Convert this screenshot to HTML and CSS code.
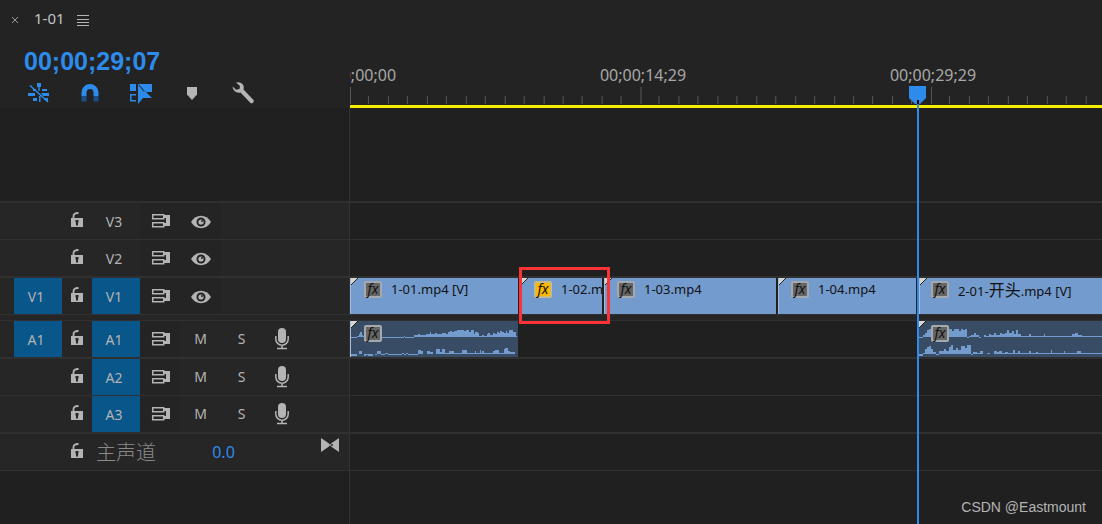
FILE: index.html
```html
<!DOCTYPE html>
<html lang="zh-CN">
<head>
<meta charset="utf-8">
<title>1-01</title>
<link rel="stylesheet" href="styles.css">
</head>
<body>
<svg class="defs" aria-hidden="true">
  <symbol id="lock" viewBox="0 0 14 16"><path d="M1 6h12v9H1z"/><path d="M3.500 6V4Q3.500 .8 8.500 1" fill="none" stroke="currentColor" stroke-width="1.800"/><path d="M5.500 8h3v2.500H8v3H6v-3h-.5z" fill="#262626"/></symbol>
  <symbol id="sync" viewBox="0 0 20 16"><path d="M1.700 1.700h11v4h-11zM1.700 9.700h11v4h-11z" fill="none" stroke="currentColor" stroke-width="1.500"/><path d="M13 2h6v11h-6v-3h2V5h-2z"/></symbol>
  <symbol id="eye" viewBox="0 0 20 14"><path d="M0 7Q4 .8 10 .8T20 7Q16 13.200 10 13.200T0 7z"/><circle cx="10" cy="7" r="4.500" fill="#242424"/><circle cx="10" cy="7" r="2.600"/><circle cx="11" cy="6" r="1" fill="#242424"/></symbol>
  <symbol id="mic" viewBox="0 0 16 22"><rect x="4" y="0" width="8" height="15" rx="4"/><path d="M1.800 8v3a6.200 6.200 0 0 0 12.400 0V8M8 17v3M3 20.500h10" fill="none" stroke="currentColor" stroke-width="1.500"/></symbol>
</svg>

<main class="timeline">
  <section class="top">
    <div class="panel">
      <div class="tab">
        <button class="close" aria-label="关闭"><svg viewBox="0 0 8 8"><path d="M1 1l6 6M7 1L1 7"/></svg></button>
        <span class="name">1-01</span>
        <button class="menu" aria-label="菜单"><svg viewBox="0 0 12 11"><path d="M0 .5h12M0 4.500h12M0 7.500h12M0 10.500h12"/></svg></button>
      </div>
      <div class="timecode">00;00;29;07</div>
      <div class="tools">
        <button class="on" aria-label="嵌套"><svg viewBox="0 0 22 22"><path d="M9 1h4v4h-1.300v4h-1.400V5H9zM5 7h3v2H5zM14 7h5v2h-5zM0 11h7v3H0zM13 11h8v3h-6zM5 16h4v3H5zM11 14h1.500v6H11zM16 16h4v3h-2z"/><path d="M2 3.500L20 20" fill="none" stroke="currentColor" stroke-width="1.500"/></svg></button>
        <button class="on" aria-label="对齐"><svg viewBox="0 0 22 22"><path d="M5 14V10.500a6 6 0 0 1 12 0V14" fill="none" stroke="currentColor" stroke-width="5"/><path d="M2.500 14h5v5.500h-5zM14.500 14h5v5.500h-5z" fill="#1c4f88"/></svg></button>
        <button class="on" aria-label="链接选择项"><svg viewBox="0 0 22 22"><path d="M0 2h6v7H0zM8 2h14v8h-6z"/><path d="M8 2v20l5-6h9z"/><path d="M14 9.500L9 3" stroke="#232323" fill="none"/><path d="M6 12.700H.8v6H6" fill="none" stroke="currentColor" stroke-width="1.500"/></svg></button>
        <button aria-label="添加标记"><svg viewBox="0 0 22 22"><path d="M6 5h10v7.500L11 18l-5-5.500z"/></svg></button>
        <button aria-label="设置"><svg viewBox="0 0 22 22"><path d="M4 .5Q8-.5 10.500 2q2 2.500 1 5.500L21.500 18q.8 1.500-.5 2.700-1.300 1-2.700 0L8.500 10.500Q5 11.500 2.500 9 .5 7 .7 4.500L4 7.800 7.500 7 8 4z"/></svg></button>
      </div>
    </div>
    <div class="ruler">
      <div class="times"><span>00;00;00;00</span><span>00;00;14;29</span><span>00;00;29;29</span></div>
      <svg class="ticks" width="2000" height="18"><defs><pattern id="tick" width="290.500" height="18" patternUnits="userSpaceOnUse"><path d="M0 0h1v17H0zM18 9h1v8h-1zM38 9h1v8h-1zM57 9h1v8h-1zM77 9h1v8h-1zM96 9h1v8h-1zM116 9h1v8h-1zM135 9h1v8h-1zM155 9h1v8h-1zM174 9h1v8h-1zM194 9h1v8h-1zM213 9h1v8h-1zM232 9h1v8h-1zM252 9h1v8h-1zM271 9h1v8h-1z"/></pattern></defs><rect width="2000" height="18" fill="url(#tick)"/></svg>
    </div>
  </section>

  <section class="row space"><div class="head"></div><div class="lane"></div></section>

  <section class="row thick">
    <div class="head video"><button class="lock" aria-label="锁定 V3"><svg><use href="#lock"/></svg></button><button class="target">V3</button><button class="sync" aria-label="同步锁定"><svg><use href="#sync"/></svg></button><button class="eye" aria-label="切换轨道输出"><svg><use href="#eye"/></svg></button></div>
    <div class="lane"></div>
  </section>
  <section class="row">
    <div class="head video"><button class="lock" aria-label="锁定 V2"><svg><use href="#lock"/></svg></button><button class="target">V2</button><button class="sync" aria-label="同步锁定"><svg><use href="#sync"/></svg></button><button class="eye" aria-label="切换轨道输出"><svg><use href="#eye"/></svg></button></div>
    <div class="lane"></div>
  </section>
  <section class="row thick">
    <div class="head video"><button class="source">V1</button><button class="lock" aria-label="锁定 V1"><svg><use href="#lock"/></svg></button><button class="target active">V1</button><button class="sync" aria-label="同步锁定"><svg><use href="#sync"/></svg></button><button class="eye" aria-label="切换轨道输出"><svg><use href="#eye"/></svg></button></div>
    <div class="lane">
      <div class="clip w-a"><i class="fx">fx</i><span>1-01.mp4 [V]</span></div>
      <div class="clip w-b"><i class="fx changed">fx</i><span>1-02.m</span></div>
      <div class="clip w-c"><i class="fx">fx</i><span>1-03.mp4</span></div>
      <div class="clip w-d"><i class="fx">fx</i><span>1-04.mp4</span></div>
      <div class="clip rest"><i class="fx">fx</i><span>2-01-<b>开头</b>.mp4 [V]</span></div>
    </div>
  </section>
  <div class="divider"></div>
  <section class="row">
    <div class="head audio"><button class="source">A1</button><button class="lock" aria-label="锁定 A1"><svg><use href="#lock"/></svg></button><button class="target active">A1</button><button class="sync" aria-label="同步锁定"><svg><use href="#sync"/></svg></button><button>M</button><button>S</button><button class="mic" aria-label="画外音录制"><svg><use href="#mic"/></svg></button></div>
    <div class="lane split">
      <div class="clip sound w-a">
        <svg class="wave" width="168" height="36"><path d="M0 17h6v-2h2v-2h1v-2h2v3h1v1h1v2h40v-2h1v2h9v-3h4v-1h2v1h6v-1h4v-2h1v2h4v-1h2v1h5v-1h4v1h2v-2h2v-1h2v1h2v-1h3v-1h7v1h2v-1h3v2h2v-2h3v4h1v-2h3v1h1v3h3v-1h2v1h3v-2h1v-1h2v2h3v-2h2v1h2v-2h2v1h1v-2h2v1h2v1h2v-2h1v2h2v-3h4v2h3v4h1v1H0z"/><path d="M0 35h6v-2h2v-3h3v3h2v2h2v-1h2v1h5v-2h2v1h2v-4h4v4h4v-2h3v2h14v-2h2v2h2v-2h2v2h10v-5h3v1h2v3h4v-3h3v1h3v2h3v-5h4v3h2v-3h3v4h4v-2h5v2h8v-3h5v3h8v-2h1v2h4v-3h1v3h1v-2h2v2h9v-2h2v-1h4v3h5v-4h1v-1h3v3h2v1h5v2H0z"/></svg>
        <i class="fx">fx</i>
      </div>
      <div class="clip sound rest">
        <svg class="wave" width="600" height="36"><path d="M0 17h4v-3h2v-2h2v-3h2v-1h3v2h17V8h3v2h2V8h5v2h2V8h2v1h2V8h2v9h2v-2h2v-1h3v-2h2v2h3v3h2v-1h3v-2h2v1h3v-2h2v1h3v-2h2v2h4v-2h2v1h3v-1h2v-3h2v3h3v-2h2v3h2v-4h2v4h3v2h8v-2h2v2h13v-2h1v2h27v-2h3v-1h3v2h4v1h420v1H0z"/><path d="M0 35h4v-3h2v-4h2v-2h2v-1h2v3h2v3h3v3h3v-4h5v-2h2v2h3v-4h2v-2h2v5h3v-2h2v2h3v-4h4v2h2v-3h4v10h2v-3h4v1h3v-2h3v3h4v-1h3v1h4v-3h3v1h2v-1h3v2h3v-1h3v1h5v-3h2v3h3v-2h2v2h9v-2h2v2h5v-1h2v1h13v-3h1v3h12v-2h1v2h12v-2h4v2h430v1H0z"/></svg>
        <i class="fx">fx</i>
      </div>
    </div>
  </section>
  <section class="row thick">
    <div class="head audio"><button class="lock" aria-label="锁定 A2"><svg><use href="#lock"/></svg></button><button class="target active">A2</button><button class="sync" aria-label="同步锁定"><svg><use href="#sync"/></svg></button><button>M</button><button>S</button><button class="mic" aria-label="画外音录制"><svg><use href="#mic"/></svg></button></div>
    <div class="lane"></div>
  </section>
  <section class="row">
    <div class="head audio"><button class="lock" aria-label="锁定 A3"><svg><use href="#lock"/></svg></button><button class="target active">A3</button><button class="sync" aria-label="同步锁定"><svg><use href="#sync"/></svg></button><button>M</button><button>S</button><button class="mic" aria-label="画外音录制"><svg><use href="#mic"/></svg></button></div>
    <div class="lane"></div>
  </section>
  <section class="row thick">
    <div class="head master"><button class="lock" aria-label="锁定主声道"><svg><use href="#lock"/></svg></button><span class="title">主声道</span><button class="gain">0.0</button><button class="ends" aria-label="显示关键帧"><svg viewBox="0 0 18 14"><path d="M0 0l8 5.500v3L0 14zM18 0l-8 5.500v3l8 5.500zM6 6.200h6v1.600H6z"/></svg></button></div>
    <div class="lane"></div>
  </section>
  <section class="row fill">
    <div class="head blank"></div>
    <div class="lane foot"><span class="credit">CSDN @Eastmount</span></div>
  </section>

  <div class="playhead"><svg viewBox="0 0 17 18"><path d="M0 0h17v12l-6 6H6l-6-6z"/><path d="M8 14h2v4H8z" fill="#000"/></svg></div>
  <div class="highlight"></div>
</main>
</body>
</html>
```
FILE: styles.css
```css
* { box-sizing: border-box; }
body {
  margin: 0;
  background: #202020;
  color: #b4b4b4;
  font: 14px/20px "Noto Sans", "Noto Sans CJK SC", sans-serif;
}
button {
  display: flex;
  align-items: center;
  justify-content: center;
  padding: 0;
  border: 0;
  background: none;
  color: inherit;
  font: inherit;
}
svg { display: block; fill: currentColor; }
.defs { position: absolute; width: 0; height: 0; }

.timeline {
  position: relative;
  display: flex;
  flex-direction: column;
  min-height: 100vh;
  overflow: hidden;
}
.top, .row { display: grid; grid-template-columns: 350px minmax(0, 1fr); }
.top { background: #232323; }

.panel { height: 108px; }
.tab { display: flex; align-items: center; height: 40px; padding-left: 11px; }
.close svg { width: 8px; height: 8px; fill: none; stroke: #999; }
.name { margin: 0 12px 4px 15px; font-size: 15px; color: #c4c4c4; }
.menu svg { width: 12px; height: 11px; fill: none; stroke: #b4b4b4; }
.timecode {
  padding-left: 24px;
  color: #2d8ceb;
  font: bold 25px/42px "Liberation Sans", Arial, sans-serif;
}
.tools { display: flex; gap: 29px; padding-left: 28px; }
.tools svg { width: 22px; height: 22px; }
.on { color: #2d8ceb; }

.ruler {
  display: flex;
  flex-direction: column;
  justify-content: flex-end;
  overflow: hidden;
  border-bottom: 3px solid #f5ee00;
}
.times { display: flex; margin-left: -142px; font-size: 16px; color: #a8a8a8; }
.times span { flex: 0 0 290px; text-align: center; }
.ticks { margin-top: 2px; fill: #565656; shape-rendering: crispEdges; }

.row { border-bottom: 1px solid #303030; }
.thick { border-top: 1px solid #303030; }
.head {
  display: grid;
  grid-template-columns: 48px 30px 48px 40px 41px 41px 39px;
  height: 36px;
  padding-left: 14px;
  border-right: 1px solid #333;
  background: #262626;
}
.space .head, .fill .head { height: auto; background: none; }
.space { min-height: 94px; }
.fill { flex: 1; border: 0; }
.lock { grid-column: 2; }
.lock svg { width: 14px; height: 16px; margin-bottom: 3px; }
.source, .active { background: #09568a; }
.target, .source { padding: 2px 4px 0 0; }
.sync, .video .eye { background: #242424; }
.sync svg { width: 20px; height: 16px; margin-left: 2px; }
.eye svg { width: 20px; height: 14px; margin-top: 2px; }
.mic svg { width: 16px; height: 22px; }
.divider { height: 6px; background: #262626; border-bottom: 1px solid #303030; }
.title { grid-column: 3 / 5; padding-left: 4px; font: 300 20px/36px "Noto Sans CJK SC", sans-serif; color: #8a8a8a; }
.gain { grid-column: 5 / 6; padding-left: 6px; font-size: 16px; color: #2d8ceb; }
.master { grid-template-columns: 48px 30px 48px 60px 41px 68px 41px; }
.ends { grid-column: 7; }
.ends svg { width: 18px; height: 14px; margin-bottom: 15px; }

.lane { display: flex; gap: 2px; min-width: 0; }
.clip {
  position: relative;
  display: flex;
  flex: none;
  gap: 9px;
  height: 36px;
  padding: 3px 0 0 13px;
  overflow: hidden;
  border-left: 1px solid #a9bddb;
  background: #739bce;
  color: #111;
  font-size: 13px;
  line-height: 16px;
  white-space: nowrap;
}
.clip::before {
  content: "";
  position: absolute;
  top: 0;
  left: -1px;
  width: 8px;
  height: 8px;
  background: linear-gradient(135deg, #d6d6d0 0 44%, #222 44% 54%, transparent 54%);
}
.clip b { font: 16px/16px "Noto Sans CJK SC", sans-serif; }
.w-a { width: 168px; }
.w-b { width: 82px; }
.w-c { width: 172px; padding-left: 12px; }
.w-d { width: 138px; padding-left: 12px; }
.rest { flex: 1; margin-left: 1px; padding-left: 11px; }
.split { gap: 400px; }
.split .rest { margin-left: 0; padding-left: 12px; }
.sound { padding-top: 4px; background: #394c66; }
.wave { position: absolute; top: 0; left: 0; fill: #739bce; shape-rendering: crispEdges; }
.fx {
  position: relative;
  flex: none;
  width: 18px;
  height: 17px;
  border: 2px solid #a5a9ae;
  border-radius: 2px;
  background: #666;
  color: #111;
  font-size: 14px;
  line-height: 12px;
  text-align: center;
}
.changed { border-color: #c9b985; background: #fbb800; }

.foot { align-items: flex-end; justify-content: flex-end; padding: 0 16px 7px 0; }
.credit { font: 14px/20px "Liberation Sans", Arial, sans-serif; color: #b4b4b4; }

.playhead {
  position: absolute;
  top: 86px;
  bottom: 0;
  left: 909px;
  width: 17px;
  color: #2d8ceb;
  background: linear-gradient(#2d8ceb, #2d8ceb) 8px 0 / 2px 100% no-repeat;
}
.playhead svg { width: 17px; height: 18px; }
.highlight {
  position: absolute;
  top: 267px;
  left: 519px;
  width: 91px;
  height: 57px;
  border: 3px solid #fb3335;
}
```
